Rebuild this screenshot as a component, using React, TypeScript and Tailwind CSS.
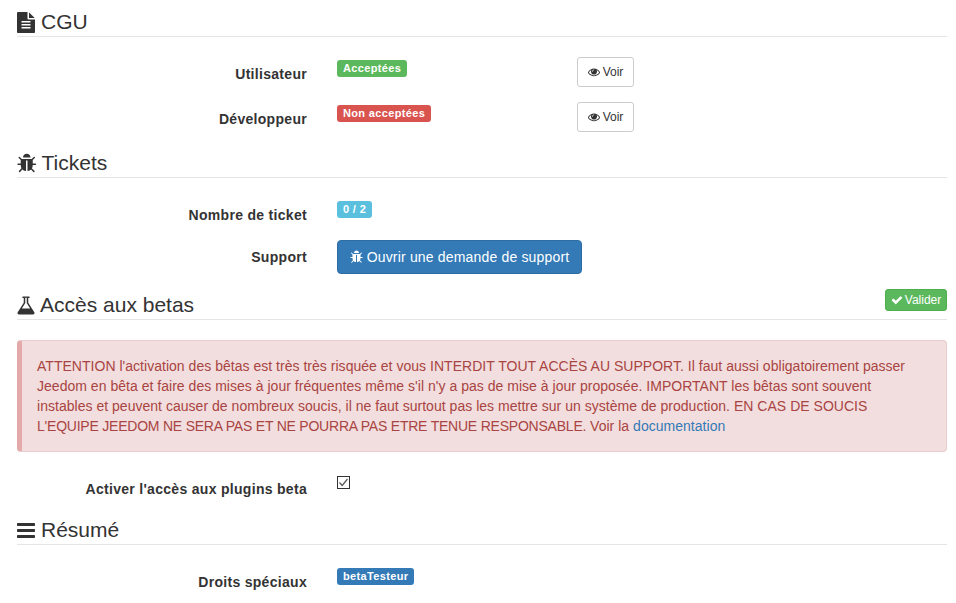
import type { ReactNode } from "react";

const P = {
  file: "M1596 476q14 14 28 36h-472v-472q22 14 36 28zm-476 164h544v1056q0 40-28 68t-68 28h-1344q-40 0-68-28t-28-68v-1600q0-40 28-68t68-28h800v544q0 40 28 68t68 28zm160 736v-64q0-14-9-23t-23-9h-704q-14 0-23 9t-9 23v64q0 14 9 23t23 9h704q14 0 23-9t9-23zm0-256v-64q0-14-9-23t-23-9h-704q-14 0-23 9t-9 23v64q0 14 9 23t23 9h704q14 0 23-9t9-23zm0-256v-64q0-14-9-23t-23-9h-704q-14 0-23 9t-9 23v64q0 14 9 23t23 9h704q14 0 23-9t9-23z",
  bars: "M1664 1344v128q0 26-19 45t-45 19h-1408q-26 0-45-19t-19-45v-128q0-26 19-45t45-19h1408q26 0 45 19t19 45zm0-512v128q0 26-19 45t-45 19h-1408q-26 0-45-19t-19-45v-128q0-26 19-45t45-19h1408q26 0 45 19t19 45zm0-512v128q0 26-19 45t-45 19h-1408q-26 0-45-19t-19-45v-128q0-26 19-45t45-19h1408q26 0 45 19t19 45z",
  check: "M1671 566q0 40-28 68l-724 724-136 136q-28 28-68 28t-68-28l-136-136-362-362q-28-28-28-68t28-68l136-136q28-28 68-28t68 28l294 295 656-657q28-28 68-28t68 28l136 136q28 28 28 68z",
  eye: "M1664 960q-152-236-381-355 61 104 61 225 0 185-131.5 316.5t-316.5 131.5-316.5-131.5-131.5-316.5q0-121 61-225-229 119-381 355 133 205 333.5 326.5t434.5 121.5 434.5-121.5 333.5-326.5zm-720-384q0-20-14-34t-34-14q-125 0-214.5 89.5t-89.5 214.5q0 20 14 34t34 14 34-14 14-34q0-86 61-147t147-61q20 0 34-14t14-34zm848 384q0 34-20 69-140 230-376.5 368.5t-499.5 138.5-499.5-139-376.5-368q-20-35-20-69t20-69q140-229 376.5-368t499.5-139 499.5 139 376.5 368q20 35 20 69z",
  flask: "M1591 1448q56 89 21.5 152.5t-140.5 63.5h-1152q-106 0-140.5-63.5t21.5-152.5l503-793v-399h-64q-26 0-45-19t-19-45 19-45 45-19h512q26 0 45 19t19 45-19 45-45 19h-64v399zm-779-725l-272 429h712l-272-429-20-31v-467h-128v467z",
  bug: "M1696 960q0 26-19 45t-45 19h-224q0 171-67 290l208 209q19 19 19 45t-19 45q-18 19-45 19t-45-19l-198-197q-5 5-15 13t-42 28.5-65 36.5-82 29-97 13v-896h-128v896q-51 0-101.5-13.5t-87-33-66-39-43.5-32.5l-15-14-183 207q-20 21-48 21-24 0-43-16-19-18-20.5-44.5t15.5-46.5l202-227q-58-114-58-274h-224q-26 0-45-19t-19-45 19-45 45-19h224v-294l-173-173q-19-19-19-45t19-45 45-19 45 19l173 173h844l173-173q19-19 45-19t45 19 19 45-19 45l-173 173v294h224q26 0 45 19t19 45zm-480-576h-640q0-133 93.5-226.5t226.5-93.5 226.5 93.5 93.5 226.5z",
};

function Icon({ d, vb, className }: { d: string; vb: string; className: string }) {
  return (
    <svg viewBox={vb} className={`shrink-0 ${className}`} fill="currentColor">
      <path d={d} />
    </svg>
  );
}

function Heading({ icon, title, gap, right }: { icon: ReactNode; title: string; gap: string; right?: ReactNode }) {
  return (
    <div className="flex h-[37px] items-start justify-between border-b border-[#e5e5e5]">
      <div className={`flex h-[36px] items-center pt-[8px] text-[21px] leading-[28px] text-[#333] ${gap}`}>
        {icon}
        <span>{title}</span>
      </div>
      {right}
    </div>
  );
}

function Row({ label, h, children }: { label: string; h: string; children: ReactNode }) {
  return (
    <div className={`flex ${h}`}>
      <div className="w-[290px] pt-[7px] text-right text-[14px] leading-[20px] font-bold tracking-[0.3px] text-[#333]">{label}</div>
      <div className="ml-[30px] flex-1">{children}</div>
    </div>
  );
}

function Label({ color, children }: { color: string; children: ReactNode }) {
  return (
    <span className={`block h-[17px] w-fit rounded-[3px] px-[6px] text-[11px] leading-[16px] font-bold tracking-[0.35px] text-white ${color}`}>{children}</span>
  );
}

function Voir() {
  return (
    <button className="flex h-[30px] w-[57px] items-center justify-center gap-[3px] rounded-[3px] border border-[#ccc] bg-white text-[12px] text-[#333]">
      <Icon d={P.eye} vb="0 0 1792 1792" className="h-[12px] w-[12px]" />
      Voir
    </button>
  );
}

export default function App() {
  return (
    <div className="h-[603px] w-[956px] overflow-hidden bg-white pr-[9px] pl-[17px] font-['Liberation_Sans',Arial,sans-serif] text-[14px] text-[#333]">
      <Heading title="CGU" gap="gap-[6px]" icon={<Icon d={P.file} vb="128 0 1536 1792" className="h-[21px] w-[18px]" />} />
      <div className="mt-[20px] flex flex-col gap-[15px]">
        <Row label="Utilisateur" h="h-[30px]">
          <div className="flex items-start">
            <div className="w-[240px] pt-[3px]"><Label color="bg-[#5cb85c]">Acceptées</Label></div>
            <Voir />
          </div>
        </Row>
        <Row label="Développeur" h="h-[30px]">
          <div className="flex items-start">
            <div className="w-[240px] pt-[3px]"><Label color="bg-[#d9534f]">Non acceptées</Label></div>
            <Voir />
          </div>
        </Row>
      </div>

      <div className="mt-[9px]">
        <Heading title="Tickets" gap="gap-[5px]" icon={<Icon d={P.bug} vb="64 0 1664 1792" className="h-[21px] w-[19.5px]" />} />
      </div>
      <div className="mt-[20px] flex flex-col gap-[15px]">
        <Row label="Nombre de ticket" h="h-[27px]">
          <div className="pt-[3px]"><Label color="bg-[#5bc0de]">0 / 2</Label></div>
        </Row>
        <Row label="Support" h="h-[34px]">
          <button className="flex h-[34px] w-[245px] items-center justify-center gap-[4px] rounded-[4px] border border-[#2e6da4] bg-[#337ab7] text-[14px] tracking-[0.17px] text-white">
            <Icon d={P.bug} vb="64 0 1664 1792" className="h-[14px] w-[13px]" />
            Ouvrir une demande de support
          </button>
        </Row>
      </div>

      <div className="mt-[9px]">
        <Heading
          title="Accès aux betas"
          gap="gap-[5px]"
          icon={<Icon d={P.flask} vb="128 0 1536 1792" className="h-[21px] w-[18px]" />}
          right={
            <button className="mt-[6px] flex h-[22px] w-[62px] items-center justify-center gap-[2px] rounded-[3px] border border-[#4cae4c] bg-[#5cb85c] text-[12px] text-white">
              <Icon d={P.check} vb="0 0 1792 1792" className="h-[12px] w-[12px]" />
              Valider
            </button>
          }
        />
      </div>

      <div className="mt-[20px] h-[112px] rounded-[4px] border border-[#ebccd1] border-l-[5px] border-l-[#e4a9a9] bg-[#f2dede] py-[15px] pr-[20px] pl-[15px] text-[14px] leading-[20px] tracking-[0.025px] text-[#a94442]">
        ATTENTION l'activation des bêtas est très très risquée et vous INTERDIT TOUT ACCÈS AU SUPPORT. Il faut aussi obligatoirement passer Jeedom en bêta et faire des mises à jour fréquentes même s'il n'y a pas de mise à jour proposée. IMPORTANT les bêtas sont souvent instables et peuvent causer de nombreux soucis, il ne faut surtout pas les mettre sur un système de production. EN CAS DE SOUCIS <span className="tracking-[-0.22px]">L'EQUIPE JEEDOM NE SERA PAS ET NE POURRA PAS ETRE TENUE RESPONSABLE.</span> Voir la <a className="text-[#337ab7]">documentation</a>
      </div>

      <div className="mt-[20px]">
        <Row label="Activer l'accès aux plugins beta" h="h-[36px]">
          <div className="mt-[4px] flex h-[13px] w-[13px] items-center justify-center border border-[#333] bg-white">
            <svg viewBox="0 0 11 11" className="h-[11px] w-[11px]"><path d="M1.5 5.5 L4.2 8.5 L9.5 2" fill="none" stroke="#555" strokeWidth="1.2" /></svg>
          </div>
        </Row>
      </div>

      <Heading title="Résumé" gap="gap-[6px]" icon={<Icon d={P.bars} vb="128 0 1536 1792" className="h-[21px] w-[18px]" />} />
      <div className="mt-[20px]">
        <Row label="Droits spéciaux" h="h-[30px]">
          <div className="pt-[3px]"><Label color="bg-[#337ab7]">betaTesteur</Label></div>
        </Row>
      </div>
    </div>
  );
}
